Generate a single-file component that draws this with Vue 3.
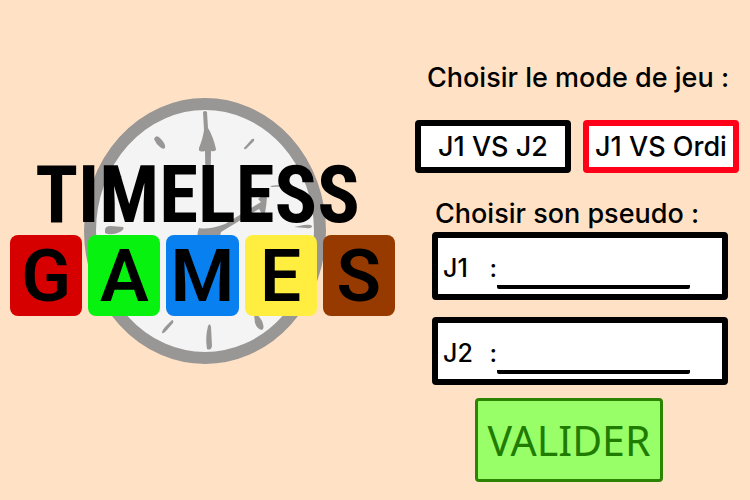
<script setup>
import { ref } from 'vue'

const tiles = [
  { letter: 'G', tone: 'red' },
  { letter: 'A', tone: 'green' },
  { letter: 'M', tone: 'blue' },
  { letter: 'E', tone: 'yellow' },
  { letter: 'S', tone: 'brown' }
]
const modes = ['J1 VS J2', 'J1 VS Ordi']
const mode = ref('J1 VS Ordi')
const players = ref([
  { id: 'j1', label: 'J1', name: '' },
  { id: 'j2', label: 'J2', name: '' }
])
</script>

<template>
  <main class="page">
    <h1 class="logo">
      <svg class="clock" viewBox="0 0 385 268" aria-hidden="true">
        <ellipse cx="195" cy="133" rx="115" ry="127" fill="#f4f4f4" stroke="#999696" stroke-width="12" />
        <g fill="#999696">
          <path d="M193 14q2-2 4 0l1 16q5 8 8 21 0 3-5 2l-1 66-4-1-1-65q-7 2-6-3 4-10 5-18z" />
          <path d="M144 41q2-5 6-1 6 6 5 10-2 2-5-1-4-3-6-8z" />
          <path d="M234 50l8-9q3-1 2 2l-8 8q-2 1-2-1z" />
          <path d="M105 77l7 1-1 1q-3-1-6-1z" />
          <path d="M95 132q0-4 6-4l12 1q2 2-3 5-9 4-15 1z" />
          <path d="M284 129l10-2q7-1 8 1 0 3-6 2z" />
          <path d="M260 88l17-2q5 0 4 2l-19 1z" />
          <path d="M257 94l-9 7 3 3-36 22q-17 6-26 4-5 13 5 20l14-4 3-12 38-23 5 8q3-11 3-25z" />
          <path d="M152 235q0-3 4-7l6-6q2 0 1 3l-7 8q-3 3-4 2z" />
          <path d="M197 251q-2-11 1-23 2-4 3 1l1 19q-1 5-5 3z" />
          <path d="M244 216q5 1 8 7 3 7 0 9-5-1-7-7z" />
        </g>
      </svg>
      <span class="wordmark">
        <span class="timeless">TIMELESS</span>
        <span class="tiles">
          <span v-for="t in tiles" :key="t.letter" class="tile" :class="t.tone">{{ t.letter }}</span>
        </span>
      </span>
    </h1>

    <form class="setup" @submit.prevent>
      <h2 id="mode-title" class="title">Choisir le mode de jeu :</h2>
      <div class="modes" role="group" aria-labelledby="mode-title">
        <button
          v-for="m in modes"
          :key="m"
          type="button"
          class="mode"
          :class="{ selected: m === mode }"
          :aria-pressed="m === mode"
          @click="mode = m"
        >{{ m }}</button>
      </div>
      <h2 class="title names-title">Choisir son pseudo :</h2>
      <div class="fields">
        <div v-for="p in players" :key="p.id" class="field">
          <label :for="p.id" class="label"><span>{{ p.label }}</span><span>:</span></label>
          <input :id="p.id" v-model="p.name" type="text" class="name" />
        </div>
      </div>
      <button type="submit" class="submit">VALIDER</button>
    </form>
  </main>
</template>

<style>
body {
  background: #ffe2c5;
}
</style>

<style scoped>
.page {
  display: grid;
  grid-template-columns: minmax(0, 385fr) minmax(0, 324fr);
  gap: 20px;
  align-items: start;
  box-sizing: border-box;
  min-height: 100vh;
  padding: 64px 11px 16px 10px;
  color: #000;
  font-family: Inter, sans-serif;
}
.logo {
  display: grid;
  width: 100%;
  max-width: 480px;
  margin: 34px auto 0;
}
.clock,
.wordmark {
  grid-area: 1 / 1;
}
.clock {
  display: block;
  width: 100%;
}
.wordmark {
  display: flex;
  flex-direction: column;
  justify-content: center;
  gap: 8px;
  padding-top: 14px;
}
.timeless {
  padding-right: 10px;
  font: 700 79px/64px "Roboto Condensed", Roboto, sans-serif;
  text-align: center;
}
.tiles {
  display: grid;
  grid-template-columns: repeat(5, 1fr);
  gap: 6px;
}
.tile {
  padding-top: 2px;
  border-radius: 8px;
  font: 600 73px/79px Roboto, sans-serif;
  text-align: center;
}
.red { background: #d60000; }
.green { background: #08f210; }
.blue { background: #0880f0; }
.yellow { background: #ffee40; }
.brown { background: #963a00; }

.setup {
  display: flex;
  flex-direction: column;
}
.title {
  margin: 0 12px;
  font-size: 27px;
  font-weight: 500;
  line-height: 28px;
  white-space: nowrap;
}
.names-title {
  margin: 27px 20px 4px;
}
.modes {
  display: grid;
  grid-template-columns: 1fr 1fr;
  gap: 12px;
  margin-top: 28px;
}
.mode {
  height: 53px;
  padding: 0;
  border: 6px solid #000;
  border-radius: 4px;
  background: #fff;
  color: #000;
  font: 500 27px/28px Inter, sans-serif;
  white-space: nowrap;
}
.selected {
  border-color: #ff0018;
}
.fields {
  display: grid;
  grid-template-columns: minmax(0, 1fr);
  gap: 17px;
  margin: 0 11px 0 17px;
}
.field {
  display: flex;
  align-items: flex-end;
  box-sizing: border-box;
  height: 68px;
  padding: 0 32px 5px 5px;
  border: 6px solid #000;
  border-radius: 4px;
  background: #fff;
}
.label {
  display: flex;
  flex: none;
  justify-content: space-between;
  width: 54px;
  padding-bottom: 7px;
  font-size: 25px;
  font-weight: 500;
  line-height: 28px;
}
.name {
  flex: 1;
  min-width: 0;
  height: 40px;
  box-sizing: border-box;
  padding: 0 4px;
  border: 0;
  border-bottom: 4px solid #000;
  border-radius: 2px;
  outline: 0;
  background: transparent;
  font: 500 25px/28px Inter, sans-serif;
}
.submit {
  align-self: center;
  width: 188px;
  height: 84px;
  margin: 13px 16px 0 0;
  padding: 0;
  border: 3px solid #2c8500;
  border-radius: 4px;
  background: #98ff68;
  color: #207c00;
  font: 400 41px/48px "Noto Sans", sans-serif;
}
</style>
